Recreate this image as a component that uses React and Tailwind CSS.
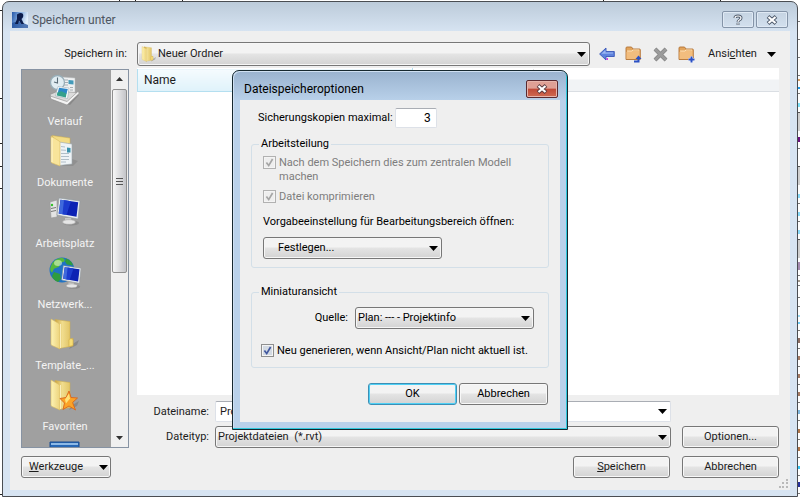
import clsx from 'clsx';

const places = [
  { name: 'Verlauf', Icon: HistoryIcon },
  { name: 'Dokumente', Icon: DocumentsIcon },
  { name: 'Arbeitsplatz', Icon: ComputerIcon },
  { name: 'Netzwerk...', Icon: NetworkIcon },
  { name: 'Template_...', Icon: FolderIcon },
  { name: 'Favoriten', Icon: FavoritesIcon },
  { name: '', Icon: DesktopIcon },
];

// bits of the drawing window that show beside the dialog
const leftLines = [10, 98, 143, 166, 188, 494];
const topTicks = [119, 135, 182, 603, 720];
const rightMarks = [
  [21, 1, '#777'], [39, 1, '#777'], [57, 1, '#777'], [75, 1, '#777'], [79, 2, '#d9a066'],
  [87, 2, '#1e9be8'], [93, 1, '#777'], [103, 4, '#7fe3fb'], [112, 19, '#cfcfcf'], [112, 1, '#555'],
  [137, 5, '#6b1080'], [148, 1, '#777'], [166, 19, '#cfcfcf'], [166, 1, '#555'], [194, 4, '#8adcfb'],
  [203, 1, '#777'], [212, 4, '#8adcfb'], [221, 1, '#777'], [230, 4, '#8adcfb'], [239, 19, '#cfcfcf'],
  [239, 1, '#555'], [262, 8, '#a58bb0'], [275, 1, '#777'], [280, 2, '#a39a8f'], [285, 1, '#777'],
  [297, 1, '#777'], [306, 1, '#777'], [315, 2, '#9fdcf5'], [322, 2, '#6fd0fb'], [330, 1, '#777'],
  [338, 5, '#8d6e63'], [348, 1, '#777'], [356, 4, '#a67c65'], [366, 1, '#777'], [374, 4, '#a67c65'],
  [384, 1, '#777'], [392, 4, '#a67c65'], [402, 1, '#777'], [410, 4, '#7fb8e0'], [420, 1, '#777'],
  [429, 4, '#b1774b'], [439, 1, '#777'], [447, 4, '#b1774b'], [457, 1, '#777'], [466, 3, '#35c6f4'],
  [475, 1, '#777'], [482, 5, '#24309c'], [493, 1, '#777'],
];

function Caret({ className }) {
  return (
    <svg viewBox="0 0 9 5" className={clsx('h-[5px] w-[9px] shrink-0', className)} aria-hidden="true">
      <path d="M0 0h9L4.5 5z" fill="#000" />
    </svg>
  );
}

function Button({ children, className, primary, ...props }) {
  return (
    <button
      type="button"
      className={clsx(
        'flex h-[22px] items-center rounded-[3px] border bg-linear-to-b from-[#f3f3f3] from-45% via-[#e4e4e4] via-50% to-[#d3d3d3]',
        primary ? 'border-[#3c8fb5] shadow-[inset_0_0_0_1px_#4fd0f5]' : 'border-[#777] shadow-[inset_0_0_0_1px_#f8f8f8]',
        className
      )}
      {...props}
    >
      {children}
    </button>
  );
}

function Select({ options, className, wrapperClass, ...props }) {
  return (
    <div className={clsx('relative', wrapperClass)}>
      <select
        className={clsx(
          'block w-full appearance-none rounded-[3px] border border-[#777] bg-linear-to-b from-[#f3f3f3] from-45% via-[#e4e4e4] via-50% to-[#d3d3d3] pt-px pr-5 shadow-[inset_0_0_0_1px_#f6f6f6]',
          className
        )}
        {...props}
      >
        {options.map((o) => (
          <option key={o}>{o}</option>
        ))}
      </select>
      <Caret className="pointer-events-none absolute inset-y-0 right-1 my-auto" />
    </div>
  );
}

function Checkbox({ id, label, disabled, defaultChecked }) {
  return (
    <div className={clsx('flex items-start gap-[3px]', disabled ? 'text-[#7d7d7d]' : 'text-black')}>
      <span className="relative mt-px size-[13px] shrink-0">
        <input
          id={id}
          type="checkbox"
          disabled={disabled}
          defaultChecked={defaultChecked}
          className={clsx(
            'peer block size-full appearance-none border shadow-[inset_0_0_0_1px_#f4f4f4]',
            disabled ? 'border-[#b1b1b1] bg-[#eee]' : 'border-[#8e8f8f] bg-[#d3dae3]'
          )}
        />
        <svg
          viewBox="0 0 13 13"
          className={clsx(
            'pointer-events-none absolute inset-0 hidden size-full peer-checked:block',
            disabled ? 'text-[#a5a5a5]' : 'text-[#41579f]'
          )}
        >
          <path d="M3.4 6.6l2.3 3L9.6 3" fill="none" stroke="currentColor" strokeWidth="1.7" />
        </svg>
      </span>
      <label htmlFor={id} className="pt-px leading-[14px]">
        {label}
      </label>
    </div>
  );
}

/* Folders */

function FolderShape() {
  return (
    <>
      <defs>
        <linearGradient id="folderFront" x1="0" x2="1">
          <stop offset="0" stopColor="#fdf3b4" />
          <stop offset="1" stopColor="#ecd27a" />
        </linearGradient>
        <linearGradient id="folderBack" x1="0" x2="1">
          <stop offset="0" stopColor="#c9a23c" />
          <stop offset=".4" stopColor="#f1dd8e" />
          <stop offset="1" stopColor="#dcbc58" />
        </linearGradient>
      </defs>
      <path d="M22 27l8-5-2 5-8 4z" fill="#666" opacity=".4" />
      <path d="M6 1.500l15 2V22l3-2v8l-14 2.500z" fill="url(#folderBack)" stroke="#cfae4c" strokeWidth=".5" />
      <path d="M2 1l8 4.500q1 .5 1 1.600V31L3 27.500Q2 27 2 26z" fill="url(#folderFront)" stroke="#d8bb5f" strokeWidth=".6" />
      <path d="M11.500 6v24" stroke="#fff8d0" strokeWidth=".8" />
      <path d="M20 21.500q2-2 4 0v6l-4 1z" fill="#f7dd76" stroke="#cba53f" strokeWidth=".5" />
    </>
  );
}

function FolderIcon({ className }) {
  return (
    <svg viewBox="0 0 32 32" className={className} aria-hidden="true">
      <FolderShape />
    </svg>
  );
}

function FavoritesIcon({ className }) {
  return (
    <svg viewBox="0 0 32 32" className={className} aria-hidden="true">
      <FolderShape />
      <path
        d="M20 12l2 6.500 6.500.5-5 4.500 3 7.500-6.500-4-6 3.500 1.500-6.500-4.500-4.500 6-1z"
        fill="#fca326"
        stroke="#d8641c"
        strokeWidth=".9"
      />
      <path d="M20 14.500l1 5-4 5-1-4z" fill="#ffe27a" />
    </svg>
  );
}

function DocumentsIcon({ className }) {
  return (
    <svg viewBox="0 0 32 32" className={className} aria-hidden="true">
      <path d="M23 24l6 2-5 5H12z" fill="#777" opacity=".4" />
      <path d="M3 .5l18 2.500V9H8z" fill="#f3dc86" stroke="#cfae4c" strokeWidth=".5" />
      <path d="M10 7l13 2v20l-13 1.500z" fill="#eef3f6" stroke="#9aa6ad" strokeWidth=".6" />
      <path d="M12 11.500l4 .5M12 15l5 .3M12 18.500h8M12 21.500h8M12 24.500h8M12 27h5" stroke="#a9b9c3" strokeWidth=".9" />
      <path d="M18 12.500l3.500.5v4.500H18z" fill="#3b93ad" />
      <path d="M2 1l8 5q1 .6 1 1.600V31L3 28Q2 27.500 2 26.500z" fill="#f8e49a" stroke="#d8bb5f" strokeWidth=".6" />
      <path d="M3 3v24" stroke="#fff6cf" strokeWidth="1" />
    </svg>
  );
}

function HistoryIcon({ className }) {
  return (
    <svg viewBox="0 0 32 32" className={className} aria-hidden="true">
      <path d="M4 26l17 5 9-10-3-2z" fill="#666" opacity=".4" />
      <path d="M13 3l13 1v19l-14-1z" fill="#eef0f1" stroke="#b4b9bb" strokeWidth=".5" />
      <path d="M15 6h4M15 8.500h4M15 11h4M21 13.500h3M21 16h3" stroke="#9ca5ab" strokeWidth=".9" />
      <path d="M19.500 6l5 .5v4l-5-.5z" fill="#439ab9" />
      <circle cx="8.500" cy="8.500" r="7" fill="#e1edf2" stroke="#98aeb8" strokeWidth="1.300" />
      <path d="M8.500 3.500v5.500L5 8" fill="none" stroke="#5a6d78" strokeWidth="1.100" />
      <path d="M1 20.500l7-3 20 1 2-1-11 12L2 24z" fill="#dcdcdc" stroke="#8c8c8c" strokeWidth=".6" />
      <path d="M9 12.500l11 1.500-1.500 10.500L6.500 22z" fill="#fff" stroke="#8fa2ac" strokeWidth=".5" />
      <path d="M10 13.800l8.800 1.100L17.500 20l-8.800-1z" fill="#2d88c8" />
      <path d="M8.300 18.500l4-1.200 5.200 2.200-.6 4-9.200-2z" fill="#35a08b" />
      <path d="M1 22l17 5.500L29.500 17l.5 2.500L18 31 2 25z" fill="#f3f3f3" stroke="#8c8c8c" strokeWidth=".6" />
    </svg>
  );
}

function Monitor() {
  return (
    <>
      <ellipse cx="22" cy="27" rx="8" ry="2.500" fill="#777" opacity=".5" />
      <path d="M16 22h6l1 4h-7z" fill="#c8c8c8" />
      <ellipse cx="20" cy="26" rx="6.500" ry="2.300" fill="#e6e6e6" stroke="#a3a3a3" strokeWidth=".5" />
      <path d="M10 2l21 3-2 18L8 19z" fill="#e9edf0" stroke="#8f989e" strokeWidth=".6" />
      <path d="M11.500 3.800l17.700 2.500-1.700 14.500L9.700 17.500z" fill="#0c22b4" />
      <path d="M11.500 3.800l9 1.300L17 19 9.700 17.500z" fill="#3f69dc" />
      <path d="M15 4.300l7 1-4.500 13.500-4-.700z" fill="#1c3ccd" />
    </>
  );
}

function ComputerIcon({ className }) {
  return (
    <svg viewBox="0 0 32 32" className={className} aria-hidden="true">
      <path d="M1 6l7-2v17l-6 1z" fill="#e4e4e4" stroke="#979797" strokeWidth=".6" />
      <path d="M2 12.500l5-1M2 15.500l5-1" stroke="#777" strokeWidth="1" />
      <circle cx="3" cy="9" r="1.200" fill="#32c02a" />
      <Monitor />
    </svg>
  );
}

function NetworkIcon({ className }) {
  return (
    <svg viewBox="0 0 32 32" className={className} aria-hidden="true">
      <circle cx="13" cy="13" r="12.500" fill="#2073c4" />
      <path d="M2 9Q5 1 13 .7q4 1 2 4l-4 1-1 4-5 2-2 4Q0 13 2 9z" fill="#57b83c" />
      <path d="M17 1.500q6 2 7 7l-6-1-2-3zM5 15l6 2 1 5-3 3q-5-2-6-6z" fill="#2f9c3e" />
      <ellipse cx="9" cy="6" rx="4" ry="3" fill="#dff5c8" opacity=".6" />
      <g transform="translate(6 7) scale(.84)">
        <Monitor />
      </g>
    </svg>
  );
}

function DesktopIcon({ className }) {
  return (
    <svg viewBox="0 0 32 32" className={className} aria-hidden="true">
      <path d="M1 2h29v22H1z" fill="#2767b5" stroke="#1c4f92" />
      <path d="M2 3h27v2H2z" fill="#8db9e6" />
    </svg>
  );
}

/* Toolbar */

function BackIcon() {
  return (
    <svg viewBox="0 0 16 14" className="h-[14px] w-4" aria-hidden="true">
      <path d="M.6 7L7 1v3.500h8.300v5H7V13z" fill="#5f83dd" stroke="#3a57b8" strokeWidth=".9" />
      <path d="M2.500 6.800L6.500 3v2.500H14v1z" fill="#9db8f3" />
      <path d="M7.500 11h1.500v2H7.500z" fill="#d63be0" />
    </svg>
  );
}

function ToolFolder({ children }) {
  return (
    <svg viewBox="0 0 17 17" className="size-[17px]" aria-hidden="true">
      <path d="M1 13.500V2q0-1 1-1h4.500l1.500 2h6.500q.8 0 .8.800v9.700z" fill="#e2a45c" stroke="#b27335" strokeWidth=".9" />
      <path d="M1.500 13V6l2-1h9l2-1.500V13z" fill="#f2bd7e" />
      <path d="M2 5h5l1-1h6" stroke="#fde1b8" fill="none" />
      {children}
    </svg>
  );
}

function AppIcon() {
  return (
    <svg viewBox="0 0 16 16" className="size-4" aria-hidden="true">
      <defs>
        <linearGradient id="appBg" x1="0" x2="1" y1="0" y2=".3">
          <stop offset="0" stopColor="#2557a8" />
          <stop offset=".5" stopColor="#82acdf" />
          <stop offset="1" stopColor="#e4f0fb" />
        </linearGradient>
      </defs>
      <path d="M0 0h16v16H0z" fill="url(#appBg)" />
      <path d="M0 11l6-2 10 4v3H0z" fill="#1f4d9b" opacity=".75" />
      <path d="M5 2.500q4-2.500 6-.5 1 3-1.500 5l2.500 5h-2.500L7 8.500 6 12H3l2-5z" fill="#0c1d4c" />
    </svg>
  );
}

function TitleBar() {
  return (
    <header className="flex h-[29px] shrink-0 items-center gap-1 px-[2px] pt-[6px] text-[12px] text-[#4d5561]">
      <AppIcon />
      <h1 className="flex-1">Speichern unter</h1>
      <div className="flex gap-[2px]">
        <button
          type="button"
          aria-label="Hilfe"
          className="flex h-[17px] w-8 items-center justify-center rounded-[2px] border border-[#8494a8] shadow-[inset_0_0_0_1px_#dfe9f4]"
        >
          <svg viewBox="0 0 10 12" className="h-3 w-[10px]" fill="none">
            <path d="M2 4Q2 2 5 2t3 2q0 1.300-1.600 2Q5 6.600 5 8.300M5 9.300v1.500" stroke="#4e5a6b" strokeWidth="3" />
            <path d="M2 4Q2 2 5 2t3 2q0 1.300-1.600 2Q5 6.600 5 8M5 9.300v1.300" stroke="#fff" strokeWidth="1.200" />
          </svg>
        </button>
        <button
          type="button"
          aria-label="Schließen"
          className="flex h-[17px] w-8 items-center justify-center rounded-[2px] border border-[#8494a8] shadow-[inset_0_0_0_1px_#dfe9f4]"
        >
          <CloseGlyph className="text-[#4e5a6b]" />
        </button>
      </div>
    </header>
  );
}

function CloseGlyph({ className }) {
  return (
    <svg viewBox="0 0 12 10" className={clsx('h-[10px] w-3', className)} fill="none" aria-hidden="true">
      <path d="M2 1.500l8 7M10 1.500l-8 7" stroke="currentColor" strokeWidth="4" />
      <path d="M2.500 2l7 6M9.500 2l-7 6" stroke="#fff" strokeWidth="2.200" />
    </svg>
  );
}

function PlacesBar() {
  return (
    <nav className="mt-px flex w-[108px] shrink-0 overflow-hidden border border-[#8793a3] bg-[#a0a0a0]">
      <ul className="min-w-0 flex-1 pt-1 pr-[3px]">
        {places.map(({ name, Icon }) => (
          <li key={name} className="h-[61px]">
            <a href="#" className="flex flex-col items-center gap-[7px] text-[#f4f4f4]">
              <Icon className="size-8" />
              <span className="leading-[18px]">{name}</span>
            </a>
          </li>
        ))}
      </ul>
      <div className="flex w-[17px] flex-col items-center bg-[#f0f0f0] py-[7px]">
        <svg viewBox="0 0 7 4" className="h-1 w-[7px]">
          <path d="M0 4h7L3.500 0z" fill="#333" />
        </svg>
        <div className="mt-[8px] flex h-[184px] w-[15px] flex-col items-center justify-center gap-[2px] rounded-[2px] border border-[#8f8f8f] bg-linear-to-r from-[#f7f7f7] to-[#c4c5c9]">
          <span className="h-px w-[7px] bg-[#555]" />
          <span className="h-px w-[7px] bg-[#555]" />
          <span className="h-px w-[7px] bg-[#555]" />
        </div>
        <svg viewBox="0 0 7 4" className="mt-auto h-1 w-[7px]">
          <path d="M0 0h7L3.500 4z" fill="#333" />
        </svg>
      </div>
    </nav>
  );
}

function OptionsDialog() {
  return (
    <section
      role="dialog"
      aria-labelledby="optTitle"
      className="absolute top-[70px] left-[232px] w-[336px] rounded-t-[7px] border border-[#16282f] bg-linear-to-b from-[#9ab3cf] to-[#b9d1ea] to-[30px] p-[7px] pt-0 text-black shadow-[inset_-1px_-1px_0_#2fc8dc,inset_1px_1px_0_#cfe0f2]"
    >
      <header className="flex h-[29px] items-center justify-between pt-[6px] pr-[2px] pl-1">
        <h2 id="optTitle" className="text-[12px]">
          Dateispeicheroptionen
        </h2>
        <button
          type="button"
          aria-label="Schließen"
          className="flex h-[18px] w-8 items-center justify-center rounded-[2px] border border-[#5a2a30] bg-linear-to-b from-[#dfa095] from-45% via-[#bf4a38] via-50% to-[#cf6a52] shadow-[inset_0_0_0_1px_#e6b5ac]"
        >
          <CloseGlyph className="text-[#5c3b40]" />
        </button>
      </header>
      <div className="bg-[#efefef] px-[11px] pt-2 pb-[17px]">
        <div className="flex items-center gap-[2px] pl-[7px]">
          <label htmlFor="copies" className="pt-px">
            Sicherungskopien maximal:
          </label>
          <input
            id="copies"
            defaultValue="3"
            className="h-5 w-[42px] rounded-[2px] border border-[#dde1e8] border-t-[#a9adb4] bg-white pr-[5px] text-right text-[12px]"
          />
        </div>

        <fieldset className="mt-[9px] rounded-[3px] border border-[#d3dfe8] px-[11px] pb-2">
          <legend className="-ml-1 px-[2px] leading-[14px]">Arbeitsteilung</legend>
          <div className="flex flex-col gap-[5px] pt-1">
            <Checkbox id="central" label="Nach dem Speichern dies zum zentralen Modell machen" disabled defaultChecked />
            <Checkbox id="compress" label="Datei komprimieren" disabled defaultChecked />
          </div>
          <label htmlFor="workset" className="mt-[11px] block leading-[14px]">
            Vorgabeeinstellung für Bearbeitungsbereich öffnen:
          </label>
          <Select id="workset" options={['Festlegen...']} wrapperClass="mt-2 w-[179px]" className="h-[22px] pl-[14px]" />
        </fieldset>

        <fieldset className="mt-[17px] rounded-[3px] border border-[#d3dfe8] px-[9px] pb-[9px]">
          <legend className="-ml-[2px] px-[2px] leading-[14px]">Miniaturansicht</legend>
          <div className="flex items-center justify-end gap-[7px] pt-2 pr-[5px]">
            <label htmlFor="source" className="pt-px">
              Quelle:
            </label>
            <Select id="source" options={['Plan: --- - Projektinfo']} wrapperClass="w-[179px]" className="h-[22px] pl-[2px]" />
          </div>
          <div className="mt-[14px]">
            <Checkbox id="regen" label="Neu generieren, wenn Ansicht/Plan nicht aktuell ist." defaultChecked />
          </div>
        </fieldset>

        <div className="mt-[15px] flex justify-end gap-[2px] pr-px">
          <Button primary className="w-[89px] justify-center">
            OK
          </Button>
          <Button className="w-[89px] justify-center">Abbrechen</Button>
        </div>
      </div>
    </section>
  );
}

function App() {
  return (
    <div className="relative flex h-screen overflow-hidden bg-white px-[2px] py-px font-[Roboto,sans-serif] text-[11px] text-[#1c1c1c]">
      <svg className="absolute inset-0 size-full" aria-hidden="true">
        {leftLines.map((y) => (
          <rect key={y} x="0" y={y} width="3" height="1" fill="#222" />
        ))}
        {topTicks.map((x) => (
          <rect key={x} x={x} y="0" width="1" height="1" fill="#222" />
        ))}
      </svg>
      <svg className="absolute inset-y-0 right-0 h-full w-[2px]" aria-hidden="true">
        {rightMarks.map(([y, h, color], i) => (
          <rect key={i} x="0" y={y} width="2" height={h} fill={color} />
        ))}
      </svg>

      <main className="relative flex min-w-0 flex-1 flex-col rounded-t-[7px] border border-[#4a4d52] bg-linear-to-b from-[#bccbda] to-[#d7e4f2] to-[30px] px-[7px] pb-[6px]">
        <TitleBar />
        <div className="relative flex min-h-0 flex-1 flex-col bg-[#efefef] px-[11px] pt-[11px] pb-3">
          <div className="flex items-center">
            <label htmlFor="folder" className="w-[116px] pr-[10px] text-right">
              Speichern in:
            </label>
            <div className="relative flex-1">
              <Select id="folder" options={['Neuer Ordner']} className="h-6 pl-[20px]" />
              <FolderIcon className="pointer-events-none absolute top-1 left-1 size-4" />
            </div>
            <div className="flex w-[189px] items-center pr-[3px] pl-[9px]">
              <button type="button" aria-label="Zurück">
                <BackIcon />
              </button>
              <button type="button" aria-label="Übergeordneter Ordner" className="ml-[10px]">
                <ToolFolder>
                  <path d="M9 15.500h4.500v-3" fill="none" stroke="#2b50c4" strokeWidth="2" />
                  <path d="M10.500 13l3-3.500 3 3.500z" fill="#2b50c4" />
                </ToolFolder>
              </button>
              <button type="button" aria-label="Löschen" className="ml-[11px]">
                <svg viewBox="0 0 15 15" className="size-[15px]" fill="none">
                  <path d="M2 2l11 11M13 2L2 13" stroke="#858585" strokeWidth="4" />
                  <path d="M2 2l11 11M13 2L2 13" stroke="#9b9b9b" strokeWidth="2.500" />
                </svg>
              </button>
              <button type="button" aria-label="Neuer Ordner" className="ml-[10px]">
                <ToolFolder>
                  <path d="M13.500 10.500v6M10.500 13.500h6" stroke="#fff" strokeWidth="3" />
                  <path d="M13.500 10.500v6M10.500 13.500h6" stroke="#2b50c4" strokeWidth="2" />
                </ToolFolder>
              </button>
              <button type="button" className="ml-[13px] flex flex-1 items-center justify-between">
                <span>
                  Ansi<u>c</u>hten
                </span>
                <Caret />
              </button>
            </div>
          </div>

          <div className="mt-[2px] flex min-h-0 flex-1 gap-2">
            <PlacesBar />
            <div className="flex min-w-0 flex-1 flex-col">
              <div className="flex-1 bg-white">
                <table className="w-full table-fixed border-collapse text-left">
                  <thead>
                    <tr className="h-[23px]">
                      <th
                        scope="col"
                        className="w-[275px] border border-[#b4dff0] border-t-white bg-linear-to-b from-[#f5fbfe] to-[#dff2fa] pl-[6px] text-[12px] font-normal"
                      >
                        Name
                      </th>
                      <th className="w-[121px] border-r border-b border-[#dfe3e8] bg-linear-to-b from-white from-45% to-[#f1f3f5] to-50%" />
                      <th className="border-b border-[#dadee3] bg-linear-to-b from-white from-45% to-[#f1f3f5] to-50%" />
                    </tr>
                  </thead>
                </table>
              </div>
              <div className="mt-[6px] flex gap-[11px]">
                <div className="flex min-w-0 flex-1 flex-col gap-1">
                  <div className="flex items-center">
                    <label htmlFor="filename" className="w-[78px] pt-px pr-[6px] text-right">
                      Dateiname:
                    </label>
                    <div className="relative flex-1">
                      <input
                        id="filename"
                        defaultValue="Projekt1.rvt"
                        className="block h-[21px] w-full rounded-[2px] border border-[#dde1e8] border-t-[#a9adb4] bg-white pl-1"
                      />
                      <Caret className="pointer-events-none absolute inset-y-0 right-1 my-auto" />
                    </div>
                  </div>
                  <div className="flex items-center">
                    <label htmlFor="filetype" className="w-[78px] pr-[6px] text-right">
                      Dateityp:
                    </label>
                    <Select
                      id="filetype"
                      options={['Projektdateien\u00a0 (*.rvt)']}
                      wrapperClass="flex-1"
                      className="h-[22px] pl-[2px]"
                    />
                  </div>
                </div>
                <Button className="w-[97px] justify-center self-end">Optionen...</Button>
              </div>
            </div>
          </div>

          <div className="mt-2 flex gap-3">
            <Button className="mr-auto w-[90px] justify-between pr-[2px] pl-[7px]">
              <span>
                <u>W</u>erkzeuge
              </span>
              <Caret />
            </Button>
            <Button className="w-[97px] justify-center">
              <span>
                <u>S</u>peichern
              </span>
            </Button>
            <Button className="w-[97px] justify-center">Abbrechen</Button>
          </div>

          <svg viewBox="0 0 9 9" className="absolute right-[2px] bottom-[2px] size-[9px]" fill="#b9b9b9" aria-hidden="true">
            <path d="M7 0h2v2H7zM3 3h2v2H3zM7 3h2v2H7zM0 7h2v2H0zM3 7h2v2H3zM7 7h2v2H7z" />
          </svg>
        </div>
      </main>

      <OptionsDialog />
    </div>
  );
}

export default App;
